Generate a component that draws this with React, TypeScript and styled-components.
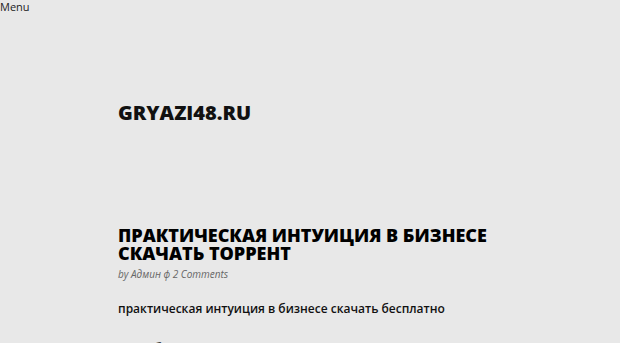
import React from "react";
import styled, { createGlobalStyle } from "styled-components";

const GlobalStyle = createGlobalStyle`
  html, body {
    margin: 0;
    padding: 0;
    background: #e8e8e8;
    overflow: hidden;
  }
  body {
    font-family: "Open Sans", "DejaVu Sans", sans-serif;
    color: #111;
  }
`

const Page = styled.div`
    width: 620px;
    height: 343px;
    overflow: hidden;
`

const MenuToggle = styled.div`
    font-size: 11px;
    line-height: 14px;
    color: #222;
`

const Content = styled.div`
    padding-left: 118px;
    width: 385px;
`

const SiteTitle = styled.h1`
    margin: 87px 0 0;
    font-size: 20px;
    line-height: 24px;
    font-weight: 800;
    color: #111;
`

const Post = styled.article`
    margin-top: 101px;
`

const PostTitle = styled.h2`
    margin: 0;
    font-size: 18px;
    line-height: 18px;
    font-weight: 800;
    color: #000;
`

const Meta = styled.div`
    margin-top: 5px;
    font-size: 10px;
    line-height: 14px;
    font-style: italic;
    color: #666;
`

const Body = styled.p`
    margin: 20px 0 0;
    font-size: 12px;
    line-height: 16px;
    font-weight: 600;
    color: #111;
`

const SubHeading = styled.h3`
    margin: 22px 0 0 25px;
    font-size: 13px;
    font-weight: 800;
    line-height: 16px;
`

const App = () => {
  return (
    <Page>
      <GlobalStyle />
      <MenuToggle>{"Menu"}</MenuToggle>
      <Content>
        <SiteTitle>{"GRYAZI48.RU"}</SiteTitle>
        <Post>
          <PostTitle>{"ПРАКТИЧЕСКАЯ ИНТУИЦИЯ В БИЗНЕСЕ СКАЧАТЬ ТОРРЕНТ"}</PostTitle>
          <Meta>{"by Админ ф 2 Comments"}</Meta>
          <Body>{"практическая интуиция в бизнесе скачать бесплатно"}</Body>
          <SubHeading>{"Об авторе"}</SubHeading>
        </Post>
      </Content>
    </Page>
  )
}

export default App;
